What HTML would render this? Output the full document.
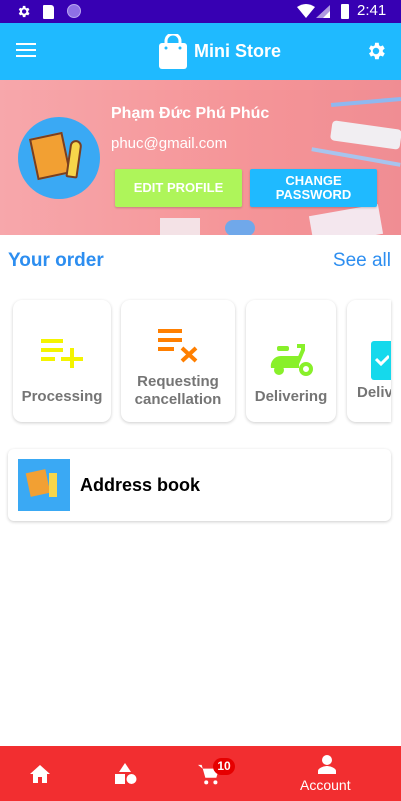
<!DOCTYPE html>
<html><head><meta charset="utf-8"><style>
*{margin:0;padding:0;box-sizing:border-box}
body{width:401px;height:801px;overflow:hidden;background:#fff;font-family:"Liberation Sans","Noto Sans CJK SC",sans-serif;position:relative}
.sb{height:23px;background:#3700b3;color:#fff;position:relative}
.ab{position:absolute;top:23px;left:0;width:401px;height:57px;background:#1fbaff;box-shadow:0 2px 4px rgba(0,0,0,.25)}
.banner{position:absolute;top:80px;left:0;width:401px;height:155px;background:linear-gradient(90deg,#f7a7ab 0%,#f59598 60%,#f08d93 100%);overflow:hidden}
.card{position:absolute;top:300px;height:122px;background:#fff;border-radius:9px;box-shadow:0 1px 3px rgba(0,0,0,.2);text-align:center;color:#757575;font-weight:bold;font-size:15px}
.nav{position:absolute;top:746px;left:0;width:401px;height:55px;background:#f22e30}
</style></head><body>
<div class="sb">
<svg style="position:absolute;left:16px;top:4px" width="15" height="15" viewBox="0 0 24 24"><path fill="#fff" d="M19.4 13a7.5 7.5 0 000-2l2.1-1.6-2-3.5-2.5 1a7 7 0 00-1.7-1L15 3h-4l-.4 2.9a7 7 0 00-1.7 1l-2.5-1-2 3.5L6.5 11a7.5 7.5 0 000 2l-2.1 1.6 2 3.5 2.5-1a7 7 0 001.7 1L11 21h4l.4-2.9a7 7 0 001.7-1l2.5 1 2-3.5zM13 15.5a3.5 3.5 0 110-7 3.5 3.5 0 010 7z"/></svg>
<div style="position:absolute;left:43px;top:5px;width:11px;height:14px;background:#fff;border-radius:1px 3px 1px 1px"></div>
<div style="position:absolute;left:67px;top:4px;width:14px;height:14px;border-radius:50%;background:#8f6fe6;border:1px solid #b9a5f0"></div>
<svg style="position:absolute;left:297px;top:4px" width="34" height="15" viewBox="0 0 34 15"><path fill="#fff" d="M0 3Q9-3 18 3L9 14z"/><path fill="#fff" d="M33 1V14H19z" opacity=".6"/><path fill="#fff" d="M33 7V14H26z"/></svg>
<div style="position:absolute;left:341px;top:4px;width:8px;height:15px;background:#fff;border-radius:1px"></div>
<div style="position:absolute;left:357px;top:2px;font-size:15px">2:41</div>
</div>
<div class="ab">
<div style="position:absolute;left:16px;top:20px;width:20px;height:2px;background:#fff;box-shadow:0 6px 0 #fff,0 12px 0 #fff"></div>
<svg style="position:absolute;left:159px;top:11px" width="28" height="35" viewBox="0 0 28 35"><rect x="0" y="9" width="28" height="26" rx="3" fill="#fff"/><path d="M7 12V7a7 7 0 0114 0v5" stroke="#fff" stroke-width="3" fill="none"/><circle cx="7" cy="14" r="1.5" fill="#1fbaff"/><circle cx="21" cy="14" r="1.5" fill="#1fbaff"/></svg>
<div style="position:absolute;left:194px;top:18px;color:#fff;font-weight:bold;font-size:18px">Mini Store</div>
<svg style="position:absolute;left:365px;top:17px" width="22" height="22" viewBox="0 0 24 24"><path fill="#fff" d="M19.4 13a7.5 7.5 0 000-2l2.1-1.6-2-3.5-2.5 1a7 7 0 00-1.7-1L15 3h-4l-.4 2.9a7 7 0 00-1.7 1l-2.5-1-2 3.5L6.5 11a7.5 7.5 0 000 2l-2.1 1.6 2 3.5 2.5-1a7 7 0 001.7 1L11 21h4l.4-2.9a7 7 0 001.7-1l2.5 1 2-3.5zM12 15.5a3.5 3.5 0 110-7 3.5 3.5 0 010 7z"/></svg>
</div>
<div class="banner">
<div style="position:absolute;right:0;top:20px;width:70px;height:4px;background:#8fb8f0;transform:rotate(-5deg)"></div>
<div style="position:absolute;right:0;top:45px;width:70px;height:20px;background:#f1eef2;border-radius:4px;transform:rotate(8deg)"></div>
<div style="position:absolute;right:0;top:75px;width:90px;height:4px;background:#a7c4ee;transform:rotate(10deg)"></div>
<div style="position:absolute;right:20px;top:130px;width:70px;height:30px;background:#f4e7ee;transform:rotate(-10deg)"></div>
<div style="position:absolute;left:225px;top:140px;width:30px;height:16px;background:#70a8ea;border-radius:8px"></div>
<div style="position:absolute;left:160px;top:138px;width:40px;height:20px;background:#f4e2e6"></div>
<div style="position:absolute;left:18px;top:37px;width:82px;height:82px;border-radius:50%;background:#3aa9f4"></div>
<div style="position:absolute;left:33px;top:55px;width:34px;height:42px;background:#f2a033;border:2px solid #7a3f20;transform:rotate(-12deg)"></div>
<div style="position:absolute;left:68px;top:60px;width:12px;height:38px;background:#f7d64a;border:2px solid #7a3f20;border-radius:6px 6px 2px 2px;transform:rotate(8deg)"></div>
<div style="position:absolute;left:111px;top:25px;color:#fff;font-weight:bold;font-size:16px">Phạm Đức Phú Phúc</div>
<div style="position:absolute;left:111px;top:55px;color:#fff;font-size:15px">phuc@gmail.com</div>
<div style="position:absolute;left:115px;top:89px;width:127px;height:38px;background:#aef55a;border-radius:2px;color:#fff;font-weight:bold;font-size:13px;text-align:center;line-height:38px;box-shadow:0 1px 2px rgba(0,0,0,.2)">EDIT PROFILE</div>
<div style="position:absolute;left:250px;top:89px;width:127px;height:38px;background:#1fbaff;border-radius:2px;color:#fff;font-weight:bold;font-size:13px;text-align:center;line-height:14px;padding-top:5px;box-shadow:0 1px 2px rgba(0,0,0,.2)">CHANGE<br>PASSWORD</div>
</div>
<div style="position:absolute;left:8px;top:250px;color:#2d8ef0;font-weight:bold;font-size:19px">Your order</div>
<div style="position:absolute;right:10px;top:250px;color:#2d8ef0;font-size:19px">See all</div>
<div class="card" style="left:13px;width:98px"><svg style="margin-top:38px" width="42" height="30" viewBox="0 0 42 30"><path d="M0 3h22M0 12h22M0 21h14M20 21h22M31 10v20" stroke="#f4f400" stroke-width="4"/></svg><div style="margin-top:16px">Processing</div></div>
<div class="card" style="left:121px;width:114px"><svg style="margin-top:28px" width="40" height="35" viewBox="0 0 40 35"><path d="M0 3h24M0 12h24M0 21h16" stroke="#ff7f00" stroke-width="4"/><path d="M24 20l14 13M38 20L24 33" stroke="#ff7f00" stroke-width="4"/></svg><div style="margin-top:6px;line-height:18px">Requesting<br>cancellation</div></div>
<div class="card" style="left:246px;width:90px"><svg style="margin-top:44px" width="44" height="32" viewBox="0 0 44 32"><path d="M28 2h6v4l-6 14" stroke="#88f02a" stroke-width="4" fill="none"/><rect x="8" y="2" width="12" height="5" rx="2" fill="#88f02a"/><path d="M2 24a10 10 0 0110-12h18v12z" fill="#88f02a"/><circle cx="10" cy="26" r="5" fill="#88f02a"/><circle cx="37" cy="25" r="5" fill="none" stroke="#88f02a" stroke-width="4"/></svg><div style="margin-top:8px">Delivering</div></div>
<div class="card" style="left:347px;width:44px;border-radius:9px 0 0 9px;overflow:hidden;text-align:left"><div style="position:absolute;left:24px;top:41px;width:24px;height:39px;background:#15d9ec;border-radius:3px"></div><svg style="position:absolute;left:28px;top:54px" width="14" height="12"><path d="M1 5l5 5 8-8" stroke="#fff" stroke-width="3" fill="none"/></svg><div style="position:absolute;left:10px;top:84px">Deliv</div></div>
<div style="position:absolute;left:8px;top:449px;width:383px;height:72px;background:#fff;border-radius:6px;box-shadow:0 1px 3px rgba(0,0,0,.2)">
<div style="position:absolute;left:10px;top:10px;width:52px;height:52px;background:#3aa9f4"><div style="position:absolute;left:10px;top:12px;width:20px;height:24px;background:#f2a033;transform:rotate(-12deg)"></div><div style="position:absolute;left:31px;top:14px;width:8px;height:24px;background:#f7d64a"></div></div>
<div style="position:absolute;left:72px;top:26px;font-weight:bold;font-size:18px;color:#000">Address book</div>
</div>
<div class="nav">
<svg style="position:absolute;left:30px;top:19px" width="20" height="18" viewBox="0 0 20 18"><path fill="#fff" d="M10 0L0 9h3v9h5v-6h4v6h5V9h3z"/></svg>
<svg style="position:absolute;left:115px;top:17px" width="22" height="22" viewBox="0 0 22 22"><path fill="#fff" d="M10 0l6 9H4z"/><rect x="0" y="11" width="10" height="10" fill="#fff"/><circle cx="16.5" cy="16" r="5" fill="#fff"/></svg>
<svg style="position:absolute;left:198px;top:18px" width="22" height="22" viewBox="0 0 24 24"><path fill="#fff" d="M0 1h4l4 14h12l3-10H5z"/><circle cx="9" cy="20" r="2.2" fill="#fff"/><circle cx="19" cy="20" r="2.2" fill="#fff"/></svg>
<div style="position:absolute;left:213px;top:12px;width:22px;height:17px;border-radius:9px;background:#e60000;color:#fff;font-size:12px;font-weight:bold;text-align:center;line-height:17px">10</div>
<svg style="position:absolute;left:317px;top:8px" width="20" height="20" viewBox="0 0 20 20"><circle cx="10" cy="6" r="5" fill="#fff"/><path fill="#fff" d="M1 20v-3c0-3 6-5 9-5s9 2 9 5v3z"/></svg>
<div style="position:absolute;left:300px;top:31px;color:#fff;font-size:14px">Account</div>
</div>
</body></html>
